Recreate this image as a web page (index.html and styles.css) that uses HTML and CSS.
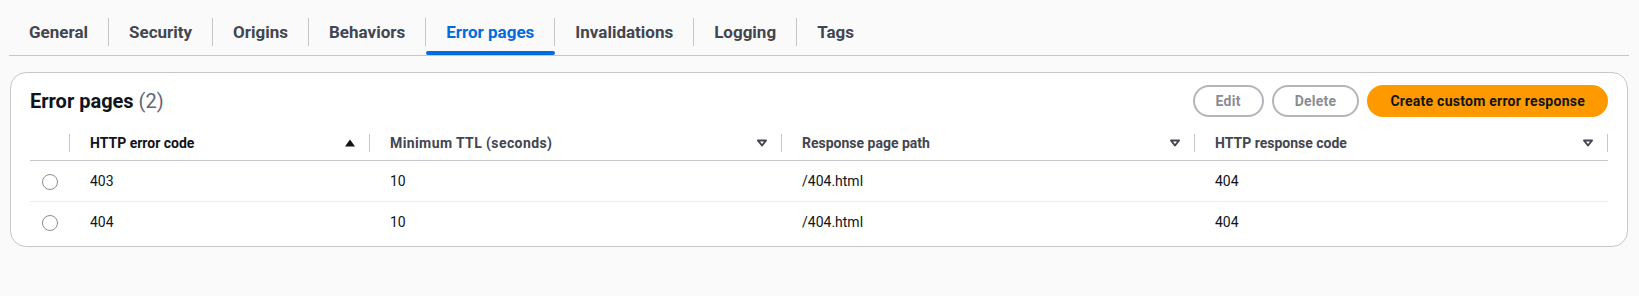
FILE: index.html
```html
<!DOCTYPE html>
<html lang="en">
<head>
  <meta charset="UTF-8">
  <title>Error pages</title>
  <link rel="stylesheet" href="styles.css">
</head>
<body>

  <!-- tabs -->
  <div class="tabs">
    <a class="tab"><span class="tab-label">General</span></a>
    <a class="tab"><span class="tab-label">Security</span></a>
    <a class="tab"><span class="tab-label">Origins</span></a>
    <a class="tab"><span class="tab-label">Behaviors</span></a>
    <a class="tab active"><span class="tab-label">Error pages</span></a>
    <a class="tab"><span class="tab-label">Invalidations</span></a>
    <a class="tab"><span class="tab-label">Logging</span></a>
    <a class="tab last"><span class="tab-label">Tags</span></a>
  </div>

  <div class="card">
    <div class="card-header">
      <h2 class="title">Error pages <span class="count">(2)</span></h2>
      <div class="actions">
        <button class="btn disabled">Edit</button>
        <button class="btn disabled">Delete</button>
        <button class="btn primary">Create custom error response</button>
      </div>
    </div>

    <table class="grid">
      <thead>
        <tr>
          <th class="col-sel"><div class="head"></div></th>
          <th class="col-code">
            <div class="head sorted">
              <span>HTTP error code</span>
              <svg width="12" height="10" viewBox="0 0 12 10"><path d="M6 1.5 L11 8.5 H1 Z" fill="#0f141a"/></svg>
            </div>
          </th>
          <th class="col-ttl">
            <div class="head">
              <span class="wide">Minimum TTL (seconds)</span>
              <svg width="12" height="10" viewBox="0 0 12 10"><path d="M2 2.5 H10 L6 7.5 Z" fill="none" stroke="#424650" stroke-width="2" stroke-linejoin="round"/></svg>
            </div>
          </th>
          <th class="col-path">
            <div class="head">
              <span>Response page path</span>
              <svg width="12" height="10" viewBox="0 0 12 10"><path d="M2 2.5 H10 L6 7.5 Z" fill="none" stroke="#424650" stroke-width="2" stroke-linejoin="round"/></svg>
            </div>
          </th>
          <th>
            <div class="head">
              <span>HTTP response code</span>
              <svg width="12" height="10" viewBox="0 0 12 10"><path d="M2 2.5 H10 L6 7.5 Z" fill="none" stroke="#424650" stroke-width="2" stroke-linejoin="round"/></svg>
            </div>
          </th>
        </tr>
      </thead>
      <tbody>
        <tr>
          <td class="sel"><span class="radio"></span></td>
          <td>403</td>
          <td>10</td>
          <td>/404.html</td>
          <td>404</td>
        </tr>
        <tr>
          <td class="sel"><span class="radio"></span></td>
          <td>404</td>
          <td>10</td>
          <td>/404.html</td>
          <td>404</td>
        </tr>
      </tbody>
    </table>
  </div>

</body>
</html>
```

FILE: styles.css
```css
body{
  margin: 0;
  background: #fafafa;
  font-family: Roboto, "Open Sans", sans-serif;
  font-size: 14px;
  color: #0f141a;
}

/* tabs */
.tabs{
  display: flex;
  margin: 0 10px 0 9px;
  padding-top: 10px;
  border-bottom: 1px solid #c6c6cd;
}

.tab{
  position: relative;
  padding: 8px 0 9px;
  color: #424650;
  font-weight: 700;
  font-size: 17px;
}

.tab-label{
  display: block;
  padding: 4px 20px;
  line-height: 20px;
  border-right: 1px solid #c6c6cd;
}

.tab.last .tab-label{
  border-right: none;
}

.tab.active{
  color: #006ce0;
}

.tab.active::after{
  content: '';
  position: absolute;
  left: 0;
  right: 0;
  bottom: 0;
  height: 4px;
  border-radius: 2px;
  background: #006ce0;
}

/* card */
.card{
  margin: 16px 11px 0 10px;
  padding: 12px 19px 4px;
  background: #fff;
  border: 1px solid #c6c6cd;
  border-radius: 16px;
}

.card-header{
  display: flex;
  align-items: center;
  justify-content: space-between;
  height: 32px;
}

.title{
  margin: 0;
  font-size: 20px;
  line-height: 24px;
  font-weight: 700;
}

.count{
  font-weight: 400;
  color: #656871;
}

.actions{
  display: flex;
  gap: 8px;
}

.btn{
  font-family: inherit;
  font-size: 14px;
  font-weight: 700;
  line-height: 20px;
  letter-spacing: .25px;
  padding: 4px 21px;
  border: 2px solid #b4b4bb;
  border-radius: 20px;
  background: #fff;
}

.btn.disabled{
  color: #8c8c94;
}

.btn.primary{
  background: #ff9900;
  border-color: #ff9900;
  color: #0f141a;
}

/* table */
.grid{
  width: 100%;
  border-collapse: collapse;
  table-layout: fixed;
}

.col-sel{ width: 40px; }
.col-code{ width: 300px; }
.col-ttl{ width: 412px; }
.col-path{ width: 413px; }

.grid th{
  padding: 17px 0 8px;
  border-bottom: 1px solid #c6c6cd;
  text-align: left;
  font-weight: 700;
  color: #424650;
}

.head{
  display: flex;
  align-items: center;
  justify-content: space-between;
  height: 18px;
  padding: 0 13px 0 20px;
  border-right: 1px solid #c6c6cd;
  line-height: 18px;
}

.col-sel .head{
  padding: 0;
}

.head.sorted{
  color: #0f141a;
}

.head .wide{
  letter-spacing: .4px;
}

.head svg{
  display: block;
}

.grid td{
  padding: 10px 0 10px 20px;
  line-height: 20px;
  border-bottom: 1px solid #ebebf0;
}

.grid tbody tr:last-child td{
  border-bottom: none;
}

.grid td.sel{
  padding-left: 0;
  text-align: center;
}

.radio{
  display: inline-block;
  width: 16px;
  height: 16px;
  box-sizing: border-box;
  border: 1.5px solid #8c8c94;
  border-radius: 50%;
  vertical-align: middle;
}
```
